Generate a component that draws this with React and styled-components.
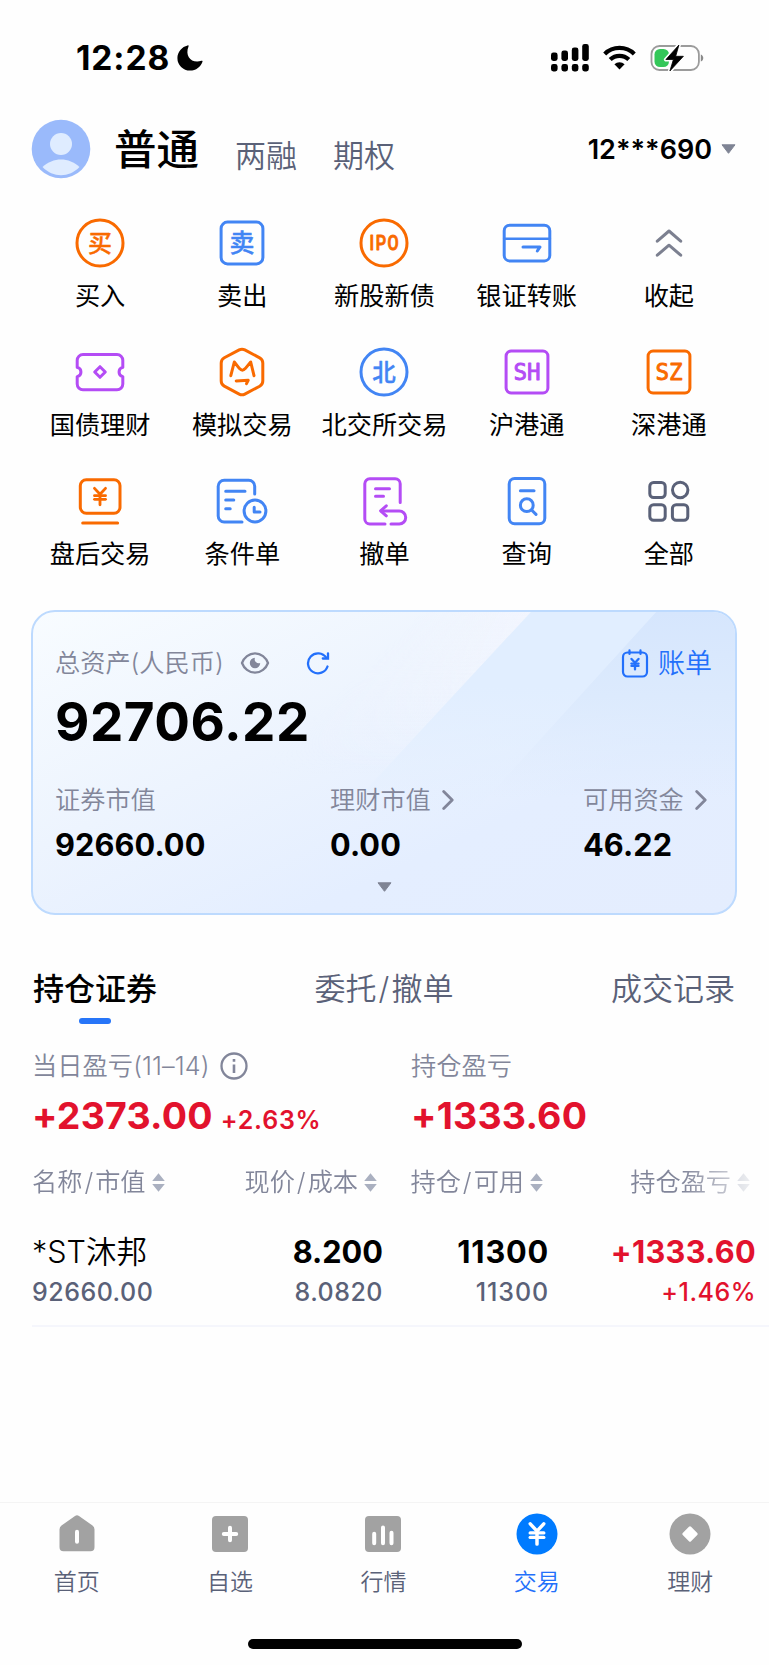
import React from "react";
import styled, { createGlobalStyle } from "styled-components";
import { JapaneseYen } from "lucide-react";

const ORANGE = "#f96a00";
const BLUE = "#4285f4";
const PURPLE = "#b44cf5";
const RED = "#e2122d";
const GRAY = "#82869a";
const SLATE = "#5a6178";
const LINK = "#2370fb";

const GlobalStyle = createGlobalStyle`
  * { box-sizing: border-box; }
  body {
    margin: 0;
    background: #fefefe;
    font-family: Inter, "Noto Sans CJK SC", sans-serif;
    color: #000;
    -webkit-font-smoothing: antialiased;
  }
  svg { display: block; flex: none; }
`;

const actions = [
  { label: "买入", icon: <BuyIcon /> },
  { label: "卖出", icon: <SellIcon /> },
  { label: "新股新债", icon: <IpoIcon /> },
  { label: "银证转账", icon: <TransferIcon /> },
  { label: "收起", icon: <CollapseIcon /> },
  { label: "国债理财", icon: <TicketIcon /> },
  { label: "模拟交易", icon: <SimulateIcon /> },
  { label: "北交所交易", icon: <BeijingIcon /> },
  { label: "沪港通", icon: <MarketIcon color={PURPLE} code="SH" /> },
  { label: "深港通", icon: <MarketIcon color={ORANGE} code="SZ" /> },
  { label: "盘后交易", icon: <AfterHoursIcon /> },
  { label: "条件单", icon: <ConditionIcon /> },
  { label: "撤单", icon: <CancelIcon /> },
  { label: "查询", icon: <QueryIcon /> },
  { label: "全部", icon: <AllIcon /> },
];

const stats = [
  { label: "证券市值", value: "92660.00" },
  { label: "理财市值", value: "0.00", more: true },
  { label: "可用资金", value: "46.22", more: true },
];

const columns = ["名称/市值", "现价/成本", "持仓/可用", "持仓盈亏"];

const navs = [
  { label: "首页", icon: <HomeIcon /> },
  { label: "自选", icon: <WatchIcon /> },
  { label: "行情", icon: <QuoteIcon /> },
  { label: "交易", icon: <TradeIcon />, active: true },
  { label: "理财", icon: <WealthIcon /> },
];

// gives the slash between two names a little air
const Slashed = ({ text }) => {
  const [left, right] = text.split("/");
  if (!right) return <span>{text}</span>;
  return (
    <span>
      {left}
      <Slash>/</Slash>
      {right}
    </span>
  );
};

const App = () => {
  return (
    <Page>
      <GlobalStyle />
      <StatusBar>
        <Clock>12:28</Clock>
        <MoonIcon />
        <StatusIcons>
          <SignalIcon />
          <WifiIcon />
          <BatteryIcon />
        </StatusIcons>
      </StatusBar>

      <Header>
        <AvatarIcon />
        <AccountTypeActive>普通</AccountTypeActive>
        <AccountType>两融</AccountType>
        <AccountType>期权</AccountType>
        <AccountNumber>12***690</AccountNumber>
        <DownTriangle />
      </Header>

      <ActionGrid>
        {actions.map((a) => (
          <Action key={a.label}>
            {a.icon}
            <ActionLabel>{a.label}</ActionLabel>
          </Action>
        ))}
      </ActionGrid>

      <AssetCard>
        <SheenLeft />
        <SheenMiddle />
        <SheenRight />
        <AssetTop>
          <AssetTitle>总资产(人民币)</AssetTitle>
          <EyeIcon />
          <RefreshIcon />
          <BillLink>
            <BillIcon />
            账单
          </BillLink>
        </AssetTop>
        <AssetTotal>92706.22</AssetTotal>
        <StatRow>
          {stats.map((s) => (
            <div key={s.label}>
              <StatLabel>
                {s.label}
                {s.more && <ChevronIcon />}
              </StatLabel>
              <StatValue>{s.value}</StatValue>
            </div>
          ))}
        </StatRow>
        <Expand>
          <DownTriangle />
        </Expand>
      </AssetCard>

      <Tabs>
        <Tab $active>持仓证券</Tab>
        <Tab>
          <Slashed text="委托/撤单" />
        </Tab>
        <Tab>成交记录</Tab>
      </Tabs>

      <ProfitRow>
        <div>
          <ProfitLabel>
            当日盈亏(11–14)
            <InfoIcon />
          </ProfitLabel>
          <ProfitValue>
            +2373.00
            <ProfitRate>+2.63%</ProfitRate>
          </ProfitValue>
        </div>
        <div>
          <ProfitLabel>持仓盈亏</ProfitLabel>
          <ProfitValue>+1333.60</ProfitValue>
        </div>
      </ProfitRow>

      <TableHead>
        {columns.map((c) => (
          <HeadCell key={c}>
            <Slashed text={c} />
            <SortIcon />
          </HeadCell>
        ))}
      </TableHead>
      <Position>
        <StockCell>
          <StockName>*ST沐邦</StockName>
          <Sub>92660.00</Sub>
        </StockCell>
        <Cell>
          <Main>8.200</Main>
          <Sub>8.0820</Sub>
        </Cell>
        <Cell>
          <Main $spacing={0.8}>11300</Main>
          <Sub $spacing={0.9}>11300</Sub>
        </Cell>
        <Cell>
          <Main $color={RED} $spacing={0.3}>+1333.60</Main>
          <Sub $color={RED}>+1.46%</Sub>
        </Cell>
      </Position>

      <BottomNav>
        <NavItems>
          {navs.map((n) => (
            <NavItem key={n.label} $active={n.active}>
              {n.icon}
              {n.label}
            </NavItem>
          ))}
        </NavItems>
        <HomeIndicator />
      </BottomNav>
    </Page>
  );
};

const Page = styled.div`
  width: 769px;
  height: 1665px;
  display: flex;
  flex-direction: column;
  overflow: hidden;
`;

const StatusBar = styled.div`
  height: 115px;
  flex: none;
  display: flex;
  align-items: center;
  padding: 0 65px 0 76px;
`;
const Clock = styled.div`
  width: 101px;
  font-size: 33.5px;
  font-weight: 700;
  letter-spacing: 0.9px;
  white-space: nowrap;
`;
const StatusIcons = styled.div`
  display: flex;
  align-items: center;
  gap: 14px;
  margin-left: auto;
`;

const Header = styled.div`
  height: 67px;
  flex: none;
  display: flex;
  align-items: center;
  padding: 0 33px 0 31px;
`;
const AccountTypeActive = styled.div`
  margin: 2px 15px 0 23px;
  font-size: 42.5px;
  font-weight: 500;
  line-height: 60px;
`;
const AccountType = styled.div`
  margin: 14px 15px 0 21px;
  font-size: 31px;
  font-weight: 350;
  line-height: 40px;
  color: ${SLATE};
`;
const AccountNumber = styled.div`
  margin: 2px 9px 0 auto;
  font-size: 27px;
  font-weight: 600;
`;

const ActionGrid = styled.div`
  flex: none;
  display: grid;
  grid-template-columns: repeat(5, 142.2px);
  grid-auto-rows: 129px;
  padding: 33px 0 0 29px;
`;
const Action = styled.div`
  display: flex;
  flex-direction: column;
  align-items: center;
  gap: 10px;
`;
const ActionLabel = styled.div`
  font-size: 25.2px;
  font-weight: 400;
  line-height: 30px;
  white-space: nowrap;
`;

const AssetCard = styled.div`
  position: relative;
  flex: none;
  width: 706px;
  height: 305px;
  margin: 8px 0 0 31px;
  padding: 31px 22px 0;
  border: 2px solid #bddafe;
  border-radius: 24px;
  background: linear-gradient(155deg, #f8fcff 0%, #edf4fe 38%, #e4eeff 68%, #e4edfe 100%);
  overflow: hidden;
`;
const Sheen = styled.div`
  position: absolute;
  inset: 0;
`;
const SheenLeft = styled(Sheen)`
  clip-path: polygon(300px 0, 498px 0, 338px 172px, 140px 172px);
  background: linear-gradient(to bottom, rgba(244, 246, 254, 0.8), rgba(238, 245, 254, 0) 54%);
  mask-image: linear-gradient(137deg, transparent 38%, #000 50%);
`;
const SheenMiddle = styled(Sheen)`
  clip-path: polygon(498px 0, 623px 0, 433px 209px, 304px 209px);
  background: linear-gradient(to bottom, #e1eeff 25%, rgba(226, 238, 255, 0) 68%);
`;
const SheenRight = styled(Sheen)`
  clip-path: polygon(623px 0, 702px 0, 702px 209px, 433px 209px);
  background: linear-gradient(to bottom, #d6e6fd 0%, #dceafd 28%, rgba(228, 238, 255, 0) 62%);
`;
const AssetTop = styled.div`
  position: relative;
  display: flex;
  align-items: center;
  height: 40px;
`;
const AssetTitle = styled.div`
  width: 185px;
  font-size: 25.2px;
  font-weight: 350;
  line-height: 36px;
  color: ${GRAY};
  white-space: nowrap;
`;
const BillLink = styled.div`
  display: flex;
  align-items: center;
  gap: 9px;
  margin: 1px 1px 0 auto;
  font-size: 27px;
  font-weight: 350;
  line-height: 36px;
  color: ${LINK};
`;
const AssetTotal = styled.div`
  position: relative;
  margin-top: 9px;
  font-size: 53px;
  font-weight: 700;
  line-height: 60px;
  letter-spacing: 0.5px;
`;
const StatRow = styled.div`
  position: relative;
  display: grid;
  grid-template-columns: 275px 253px 1fr;
  margin-top: 30px;
`;
const StatLabel = styled.div`
  display: flex;
  align-items: center;
  gap: 11px;
  font-size: 25.2px;
  font-weight: 350;
  line-height: 36px;
  color: ${GRAY};
  white-space: nowrap;
`;
const StatValue = styled.div`
  margin-top: 8px;
  font-size: 30.7px;
  font-weight: 700;
  line-height: 37px;
  letter-spacing: 0.1px;
`;
const Expand = styled.div`
  position: relative;
  display: flex;
  justify-content: center;
  margin-top: 19px;
`;

const Slash = styled.span`
  margin: 0 2px;
`;

const Tabs = styled.div`
  flex: none;
  display: flex;
  justify-content: space-between;
  margin: 52px 34px 0 33px;
`;
const Tab = styled.div`
  font-size: 31px;
  font-weight: ${(p) => (p.$active ? 500 : 350)};
  line-height: 44px;
  color: ${(p) => (p.$active ? "#000" : SLATE)};

  &::after {
    content: "";
    display: block;
    width: 32px;
    height: 6px;
    margin: 7px auto 0;
    border-radius: 3px;
    background: ${(p) => (p.$active ? "#2775f8" : "transparent")};
  }
`;

const ProfitRow = styled.div`
  flex: none;
  display: grid;
  grid-template-columns: 379px 1fr;
  margin: 24px 0 0 32px;
`;
const ProfitLabel = styled.div`
  display: flex;
  align-items: center;
  gap: 10px;
  height: 36px;
  font-size: 25.2px;
  font-weight: 350;
  line-height: 36px;
  letter-spacing: 0.1px;
  color: ${GRAY};
`;
const ProfitValue = styled.div`
  display: flex;
  align-items: baseline;
  height: 44px;
  margin-top: 10px;
  font-size: 37.5px;
  font-weight: 700;
  line-height: 44px;
  letter-spacing: 0.2px;
  color: ${RED};
`;
const ProfitRate = styled.span`
  margin-left: 8px;
  font-size: 25px;
  font-weight: 600;
  letter-spacing: 0.8px;
`;

const tableColumns = "185px 166px 166px 207px";

const TableHead = styled.div`
  flex: none;
  display: grid;
  grid-template-columns: ${tableColumns};
  margin: 26px 0 0 32px;
  mask-image: linear-gradient(to right, #000 650px, transparent 737px);
`;
const HeadCell = styled.div`
  display: flex;
  align-items: center;
  justify-content: flex-end;
  gap: 6px;
  height: 36px;
  padding-right: 6px;
  font-size: 25.2px;
  font-weight: 350;
  line-height: 36px;
  color: ${GRAY};
  white-space: nowrap;

  &:first-child {
    justify-content: flex-start;
  }
`;
const Position = styled.div`
  flex: none;
  display: grid;
  grid-template-columns: ${tableColumns};
  margin: 32px 0 0 32px;
  padding-bottom: 17px;
  border-bottom: 2px solid #f5f6fc;
`;
const Cell = styled.div`
  text-align: right;
`;
const StockCell = styled(Cell)`
  text-align: left;
`;
const Main = styled.div`
  height: 40px;
  font-size: 30.7px;
  font-weight: 700;
  line-height: 40px;
  letter-spacing: ${(p) => p.$spacing || 0}px;
  color: ${(p) => p.$color || "#000"};
`;
const StockName = styled(Main)`
  font-size: 30.5px;
  font-weight: 350;
`;
const Sub = styled.div`
  margin-top: 4px;
  font-size: 25px;
  font-weight: 500;
  line-height: 32px;
  letter-spacing: ${(p) => p.$spacing || 0.5}px;
  color: ${(p) => p.$color || SLATE};
`;

const BottomNav = styled.div`
  flex: none;
  height: 163px;
  margin-top: auto;
  border-top: 1px solid #f4f4f4;
`;
const NavItems = styled.div`
  display: grid;
  grid-template-columns: repeat(5, 153.4px);
  padding-top: 9px;
`;
const NavItem = styled.div`
  display: flex;
  flex-direction: column;
  align-items: center;
  gap: 10px;
  font-size: 23px;
  font-weight: 350;
  line-height: 32px;
  color: ${(p) => (p.$active ? LINK : SLATE)};
`;
const HomeIndicator = styled.div`
  width: 274px;
  height: 10px;
  margin: 41px auto 0;
  border-radius: 5px;
  background: #000;
`;

/* ---- action icons, 56 x 56 ---- */

const IconSvg = styled.svg.attrs({ viewBox: "0 0 56 56", width: 56, height: 56 })`
  fill: none;
  stroke: ${(p) => p.$color};
  stroke-width: 3;
  stroke-linecap: round;
  stroke-linejoin: round;
`;
const IconText = styled.text.attrs({ textAnchor: "middle" })`
  fill: ${(p) => p.$color};
  stroke: ${(p) => p.$color};
  stroke-width: 0.4;
  font-family: "Noto Sans CJK SC", sans-serif;
  font-size: ${(p) => p.$size}px;
  font-weight: 500;
`;
const IpoText = styled(IconText)`
  stroke-width: 0.9;
  font-family: Roboto, sans-serif;
  letter-spacing: 2px;
`;
const MarketText = styled(IconText)`
  stroke-width: 0.9;
  font-family: "DejaVu Sans Mono", monospace;
  font-weight: 400;
`;

function BuyIcon() {
  return (
    <IconSvg $color={ORANGE}>
      <circle cx="28" cy="28" r="23" />
      <IconText $color={ORANGE} $size={24} x="28" y="36.8">买</IconText>
    </IconSvg>
  );
}

function SellIcon() {
  return (
    <IconSvg $color={BLUE}>
      <rect x="7.1" y="7.1" width="41.8" height="41.8" rx="6.5" />
      <IconText $color={BLUE} $size={25} x="28" y="37.2">卖</IconText>
    </IconSvg>
  );
}

function IpoIcon() {
  return (
    <IconSvg $color={ORANGE}>
      <circle cx="28" cy="28" r="23" />
      <IpoText $color={ORANGE} $size={19.5} x="28.9" y="34.9" textLength="31" lengthAdjust="spacingAndGlyphs">
        IPO
      </IpoText>
    </IconSvg>
  );
}

function TransferIcon() {
  return (
    <IconSvg $color={BLUE}>
      <rect x="5.2" y="10.3" width="45.6" height="35.6" rx="5.5" />
      <path d="M5.2 23.8H50.8" strokeWidth="2.6" />
      <path d="M24 31.9H41L38.3 36" />
    </IconSvg>
  );
}

function CollapseIcon() {
  return (
    <IconSvg $color="#7c8090">
      <path d="M16.3 26.2L28 16L39.7 26.2M16.3 40.2L28 30.2L39.7 40.2" />
    </IconSvg>
  );
}

function TicketIcon() {
  return (
    <IconSvg $color={PURPLE}>
      <path d="M5.2 16.3a5.8 5.8 0 0 1 5.8-5.8h34a5.8 5.8 0 0 1 5.8 5.8V23.4a4.7 4.7 0 0 0 0 9.2V40a5.8 5.8 0 0 1-5.8 5.8H11A5.8 5.8 0 0 1 5.2 40V32.6a4.7 4.7 0 0 0 0-9.2Z" />
      <path d="M28 22.7L33.3 28L28 33.3L22.7 28Z" />
    </IconSvg>
  );
}

function SimulateIcon() {
  return (
    <IconSvg $color={ORANGE}>
      <path d="M25.2 5.9a6 6 0 0 1 5.6 0L45.7 13.8a6 6 0 0 1 3.1 5.2V37a6 6 0 0 1-3.1 5.2L30.8 50.1a6 6 0 0 1-5.6 0L10.3 42.2A6 6 0 0 1 7.2 37V19a6 6 0 0 1 3.1-5.2Z" />
      <path d="M16.8 31.7L20.3 18L25.5 24.6Q28.4 27.8 31.2 24.6L36.7 18L40 31.7" />
      <path d="M22.2 37L34.2 36.3L32.5 39.6" />
    </IconSvg>
  );
}

function BeijingIcon() {
  return (
    <IconSvg $color={BLUE}>
      <circle cx="28" cy="28" r="23" />
      <IconText $color={BLUE} $size={23.5} x="28" y="36.5">北</IconText>
    </IconSvg>
  );
}

function MarketIcon({ color, code }) {
  return (
    <IconSvg $color={color}>
      <rect x="7.1" y="7.1" width="41.8" height="41.8" rx="5" />
      <MarketText $color={color} $size={22.5} x="28" y="36.3">{code}</MarketText>
    </IconSvg>
  );
}

function AfterHoursIcon() {
  return (
    <IconSvg $color={ORANGE}>
      <rect x="8.3" y="6.8" width="39.7" height="33.4" rx="6" />
      <path d="M10.7 50H45.6" />
      <JapaneseYen x="17" y="12.6" width="22" height="22" color={ORANGE} strokeWidth={3.1} />
    </IconSvg>
  );
}

function ConditionIcon() {
  return (
    <IconSvg $color={BLUE}>
      <path d="M40.7 21V13.3a6 6 0 0 0-6-6H10.2a6 6 0 0 0-6 6V43a6 6 0 0 0 6 6H28" />
      <path d="M11.7 18.3H31M11.7 27H19.8M11.7 35.7H16.2" />
      <circle cx="41" cy="38" r="10.9" />
      <path d="M40.2 34.2V38.9H46" />
    </IconSvg>
  );
}

function CancelIcon() {
  return (
    <IconSvg $color={PURPLE}>
      <path d="M44.2 29.4V10.8a5 5 0 0 0-5-5H13.8a5 5 0 0 0-5 5V46a5 5 0 0 0 5 5H29" />
      <path d="M19.5 15.7H33.5M19.5 23.3H27.5" />
      <path d="M35 51H43.2a6.5 6.5 0 0 0 0-13H25.5" />
      <path d="M30.3 32.8L24.6 37.8L30.3 42.8" />
    </IconSvg>
  );
}

function QueryIcon() {
  return (
    <IconSvg $color={BLUE}>
      <rect x="10.2" y="5.5" width="35.6" height="45.3" rx="5.5" />
      <path d="M21.4 17.7H35" />
      <circle cx="27.8" cy="32.2" r="6.4" />
      <path d="M32.6 37L37 41.4" />
    </IconSvg>
  );
}

function AllIcon() {
  return (
    <IconSvg $color={SLATE}>
      <rect x="8.8" y="9.4" width="15.4" height="15.2" rx="3.8" />
      <circle cx="39.2" cy="17" r="7.7" />
      <rect x="8.8" y="31.8" width="15.4" height="15.4" rx="3.8" />
      <rect x="31.4" y="31.8" width="15.4" height="15.4" rx="3.8" />
    </IconSvg>
  );
}

/* ---- status bar ---- */

function MoonIcon() {
  return (
    <svg width="26" height="26" viewBox="0 0 26 26">
      <path d="M10.6 0.4C5 1.6 0.4 6.8 0.4 13A12.6 12.6 0 0 0 13 25.6C19 25.6 23.8 22 25.5 16.8C25.7 15.9 25.2 15.5 24.4 15.8C15 19 7.5 11.5 11.5 1.5C11.8 0.7 11.4 0.2 10.6 0.4Z" />
    </svg>
  );
}

function SignalIcon() {
  return (
    <svg width="38" height="28" viewBox="0 0 38 28">
      {[8.5, 10.5, 13.5, 17].map((h, i) => (
        <g key={h}>
          <rect x={i * 10.4} y={17 - h} width="6.6" height={h} rx="2.4" />
          <rect x={i * 10.4} y="20" width="6.6" height="7.5" rx="2.4" />
        </g>
      ))}
    </svg>
  );
}

function WifiIcon() {
  return (
    <svg width="33" height="25" viewBox="0 0 33 25" fill="none" stroke="#000" strokeWidth="4.2">
      <path d="M1.7 8.9A21 21 0 0 1 31.3 8.9" />
      <path d="M7.2 14.6A13.3 13.3 0 0 1 25.8 14.6" />
      <path d="M11.4 19.3A7.5 7.5 0 0 1 21.6 19.3L16.5 24.5Z" fill="#000" stroke="none" />
    </svg>
  );
}

function BatteryIcon() {
  return (
    <svg width="54" height="28" viewBox="0 0 54 28">
      <rect x="1.5" y="2" width="47.4" height="24" rx="8" fill="none" stroke="#9b9b9b" strokeWidth="1.8" />
      <path d="M50.8 10.5C54.1 11.5 54.1 16.5 50.8 17.5Z" fill="#8a8a8a" />
      <rect x="4.5" y="5" width="14.5" height="18" rx="5.5" fill="#34c759" />
      <path d="M28.9 1L15.9 15.5H23.4L19.9 27L33.4 12.3H25.7Z" stroke="#fefefe" strokeWidth="4" strokeLinejoin="round" />
      <path d="M28.9 1L15.9 15.5H23.4L19.9 27L33.4 12.3H25.7Z" stroke="#000" strokeWidth="0.8" strokeLinejoin="round" />
    </svg>
  );
}

/* ---- header and asset card ---- */

function AvatarIcon() {
  return (
    <svg width="60" height="60" viewBox="0 0 60 60">
      <circle cx="30" cy="30" r="29.3" fill="#9abafb" />
      <circle cx="30" cy="25" r="11" fill="#dfecff" />
      <path d="M11.5 48C22 38 38 38 48.5 48C38 59 22 59 11.5 48Z" fill="#dfecff" />
    </svg>
  );
}

function DownTriangle() {
  return (
    <svg width="15" height="10" viewBox="0 0 15 10">
      <path d="M1 0.8H14L7.5 9.3Z" fill="#7f8494" stroke="#7f8494" strokeLinejoin="round" />
    </svg>
  );
}

function EyeIcon() {
  return (
    <svg width="30" height="24" viewBox="0 0 30 24">
      <path
        d="M2 12C4 6.5 9 2.3 15 2.3S26 6.5 28 12C26 17.5 21 21.7 15 21.7S4 17.5 2 12Z"
        fill="none"
        stroke={GRAY}
        strokeWidth="2.3"
        strokeLinejoin="round"
      />
      <path d="M15 6.8A5.2 5.2 0 1 0 20.2 12A4 4 0 0 1 15 6.8Z" fill={GRAY} />
    </svg>
  );
}

const RefreshSvg = styled.svg`
  margin-left: 36px;
`;

function RefreshIcon() {
  return (
    <RefreshSvg width="24" height="24" viewBox="0 0 24 24" fill="none" stroke={LINK} strokeWidth="2.3" strokeLinecap="round">
      <path d="M21.5 15.5A10 10 0 1 1 20.3 6.7" />
      <path d="M22 2.3V7.5H16.8" />
    </RefreshSvg>
  );
}

function BillIcon() {
  return (
    <svg width="28" height="30" viewBox="0 0 28 30" fill="none" stroke={LINK} strokeWidth="2.2" strokeLinecap="round">
      <rect x="2" y="3.5" width="24" height="24" rx="4.5" />
      <path d="M8.5 1.3V5M19.5 1.3V5" />
      <JapaneseYen x="7" y="8.2" width="14" height="14" strokeWidth={4} />
    </svg>
  );
}

function ChevronIcon() {
  return (
    <svg width="12" height="20" viewBox="0 0 12 20" fill="none" stroke={GRAY} strokeWidth="2.8" strokeLinecap="round" strokeLinejoin="round">
      <path d="M1.7 1.5L10.2 10L1.7 18.5" />
    </svg>
  );
}

function InfoIcon() {
  return (
    <svg width="28" height="28" viewBox="0 0 28 28" fill="none" stroke={GRAY} strokeWidth="2.3">
      <circle cx="14" cy="14" r="12.5" />
      <path d="M14 12.5V21M14 7V9.8" strokeWidth="2.6" />
    </svg>
  );
}

function SortIcon() {
  return (
    <svg width="13" height="19" viewBox="0 0 13 19" fill="#aab0c0">
      <path d="M6.5 0.2L12.8 7.9H0.2ZM0.2 11.1H12.8L6.5 18.8Z" />
    </svg>
  );
}

/* ---- bottom navigation ---- */

const NavSvg = styled.svg.attrs({ viewBox: "0 0 44 44", width: 44, height: 44 })`
  fill: #a2a2a2;
  stroke: #fff;
  stroke-width: 4;
  stroke-linecap: round;
`;

function HomeIcon() {
  return (
    <NavSvg>
      <path d="M20 4Q22 2.4 24 4L37.5 13.5Q39.5 15 39.5 17.5V35Q39.5 39.3 35.5 39.3H8.5Q4.5 39.3 4.5 35V17.5Q4.5 15 6.5 13.5Z" stroke="none" />
      <path d="M22 19.8V29.7" />
    </NavSvg>
  );
}

function WatchIcon() {
  return (
    <NavSvg>
      <rect x="4" y="4" width="36" height="36" rx="4" stroke="none" />
      <path d="M22 15.8V28.2M15.8 22H28.2" />
    </NavSvg>
  );
}

function QuoteIcon() {
  return (
    <NavSvg>
      <rect x="4" y="4" width="36" height="36" rx="4" stroke="none" />
      <path d="M13.2 21.8V31.2M22 15.5V31.2M30.5 20.8V31.2" />
    </NavSvg>
  );
}

function TradeIcon() {
  return (
    <NavSvg>
      <circle cx="22" cy="22" r="20.5" fill="#007bff" stroke="none" />
      <JapaneseYen x="8.5" y="8.5" width="27" height="27" color="#fff" strokeWidth={3.1} />
    </NavSvg>
  );
}

function WealthIcon() {
  return (
    <NavSvg>
      <circle cx="22" cy="22" r="20.5" stroke="none" />
      <path d="M22 15.8L28.2 22L22 28.2L15.8 22Z" fill="#fff" strokeWidth="3" strokeLinejoin="round" />
    </NavSvg>
  );
}

export default App;
